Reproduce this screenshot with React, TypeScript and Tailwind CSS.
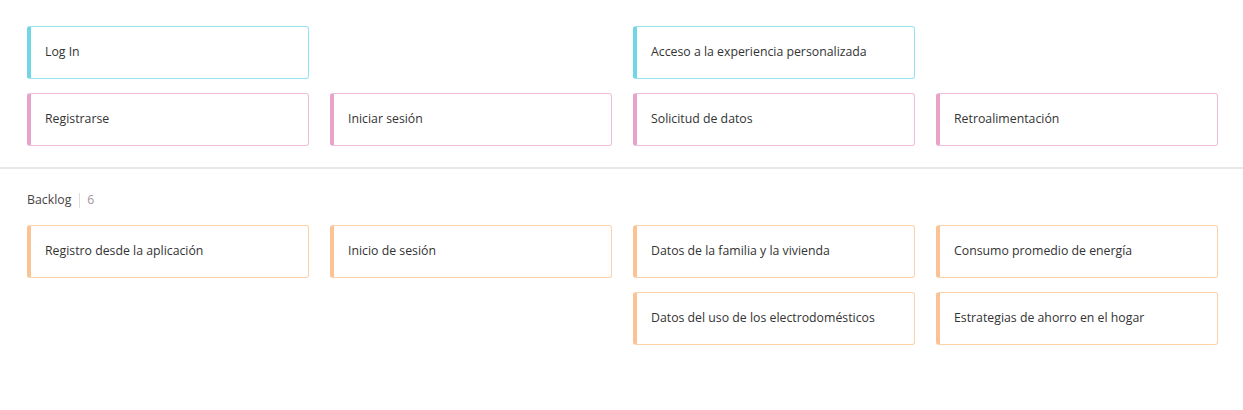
import React from "react";

type Color = "cyan" | "pink" | "orange";

const styles: Record<Color, string> = {
  cyan: "border-[#93e2ef] border-l-[#6fd6e6]",
  pink: "border-[#efbdd9] border-l-[#e8a3cb]",
  orange: "border-[#fcd1a8] border-l-[#fbc393]",
};

function Card({ text, color }: { text: string; color: Color }) {
  return (
    <div
      className={`h-[53px] w-[282px] rounded-[3px] border border-l-4 bg-white flex items-center pl-[14px] text-[12.3px] text-[#333333] ${styles[color]}`}
    >
      {text}
    </div>
  );
}

function Empty() {
  return <div className="h-[53px] w-[282px]" />;
}

export default function App() {
  return (
    <div
      className="w-[1243px] h-[410px] bg-white"
      style={{ fontFamily: '"Open Sans", "Noto Sans", sans-serif' }}
    >
      <div className="pt-[26px] pl-[27px]">
        <div className="grid grid-cols-[282px_282px_282px_282px] gap-x-[21px] gap-y-[14px]">
          <Card text="Log In" color="cyan" />
          <Empty />
          <Card text="Acceso a la experiencia personalizada" color="cyan" />
          <Empty />
          <Card text="Registrarse" color="pink" />
          <Card text="Iniciar sesión" color="pink" />
          <Card text="Solicitud de datos" color="pink" />
          <Card text="Retroalimentación" color="pink" />
        </div>
      </div>
      <div className="mt-[21px] h-[2px] bg-[#e8e8e8]" />
      <div className="pl-[27px] pt-[23px]">
        <div className="flex items-center h-[17px] text-[12.3px]">
          <span className="text-[#444444]">Backlog</span>
          <span className="ml-[8px] mr-[7px] h-[15px] w-px bg-[#dddddd]" />
          <span className="text-[#a3949e]">6</span>
        </div>
        <div className="mt-[16px] grid grid-cols-[282px_282px_282px_282px] gap-x-[21px] gap-y-[14px]">
          <Card text="Registro desde la aplicación" color="orange" />
          <Card text="Inicio de sesión" color="orange" />
          <Card text="Datos de la familia y la vivienda" color="orange" />
          <Card text="Consumo promedio de energía" color="orange" />
          <Empty />
          <Empty />
          <Card text="Datos del uso de los electrodomésticos" color="orange" />
          <Card text="Estrategias de ahorro en el hogar" color="orange" />
        </div>
      </div>
    </div>
  );
}
